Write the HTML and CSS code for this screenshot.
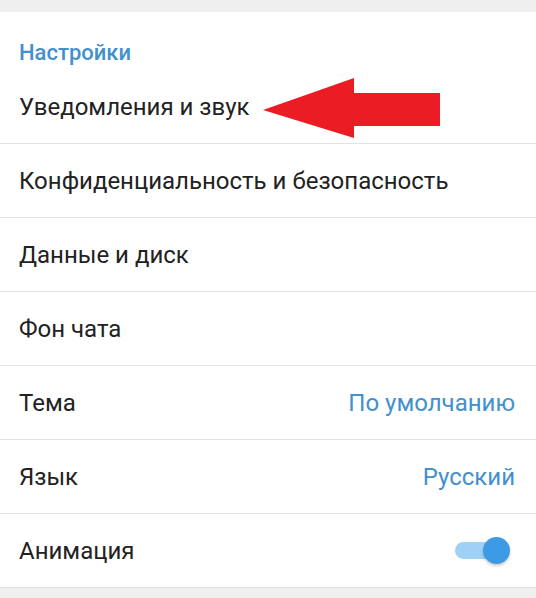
FILE: index.html
```html
<!DOCTYPE html>
<html lang="ru">
<head>
    <meta charset="UTF-8">
    <meta name="viewport" content="width=device-width, initial-scale=1.0">
    <title>Настройки</title>
    <link rel="stylesheet" href="styles.css">
</head>
<body>
    <div class="card">
        <h2 class="section-title">Настройки</h2>
        <ul class="settings">
            <li class="row">Уведомления и звук</li>
            <li class="row">Конфиденциальность и безопасность</li>
            <li class="row">Данные и диск</li>
            <li class="row">Фон чата</li>
            <li class="row">Тема <span class="value">По умолчанию</span></li>
            <li class="row">Язык <span class="value">Русский</span></li>
            <li class="row">Анимация <span class="toggle on"><span class="knob"></span></span></li>
        </ul>

        <!-- стрелка-указатель поверх списка -->
        <svg class="pointer" width="200" height="70" viewBox="0 0 200 70">
            <polygon points="0,32 91,0 91,15 177,15 177,48 91,48 91,60" fill="#ec1c24"/>
        </svg>
    </div>
</body>
</html>
```

FILE: styles.css
```css
:root {
    --accent: #4290cc;
    --text: #222222;
    --divider: #e3e3e3;
    --bg: #efefef;
}
body {
    margin: 0;
    background: var(--bg);
    font-family: Roboto, 'Noto Sans', sans-serif;
    color: var(--text);
}
.card {
    position: relative;
    background: white;
    margin-top: 12px;
    border-bottom: 1px solid #e2e2e2;
}
.section-title {
    margin: 0;
    padding: 30px 19px 6px;
    line-height: 22px;
    font-size: 22px;
    font-weight: 500;
    color: var(--accent);
}
.settings {
    list-style: none;
    margin: 0;
    padding: 0;
}
.row {
    display: flex;
    align-items: center;
    justify-content: space-between;
    height: 73px;
    padding: 0 21px 0 19px;
    font-size: 24px;
    border-bottom: 1px solid var(--divider);
}
.row:last-child {
    border-bottom: none;
}
.value {
    color: var(--accent);
}
.toggle {
    position: relative;
    width: 50px;
    height: 17px;
    border-radius: 9px;
    background: #9fd0f6;
    margin-right: 10px;
}
.knob {
    position: absolute;
    right: -5px;
    top: -5px;
    width: 27px;
    height: 27px;
    border-radius: 50%;
    background: #3d9be6;
    box-shadow: 0 2px 3px rgba(0,0,0,0.2);
}
.pointer {
    position: absolute;
    left: 263px;
    top: 66px;
}
```
